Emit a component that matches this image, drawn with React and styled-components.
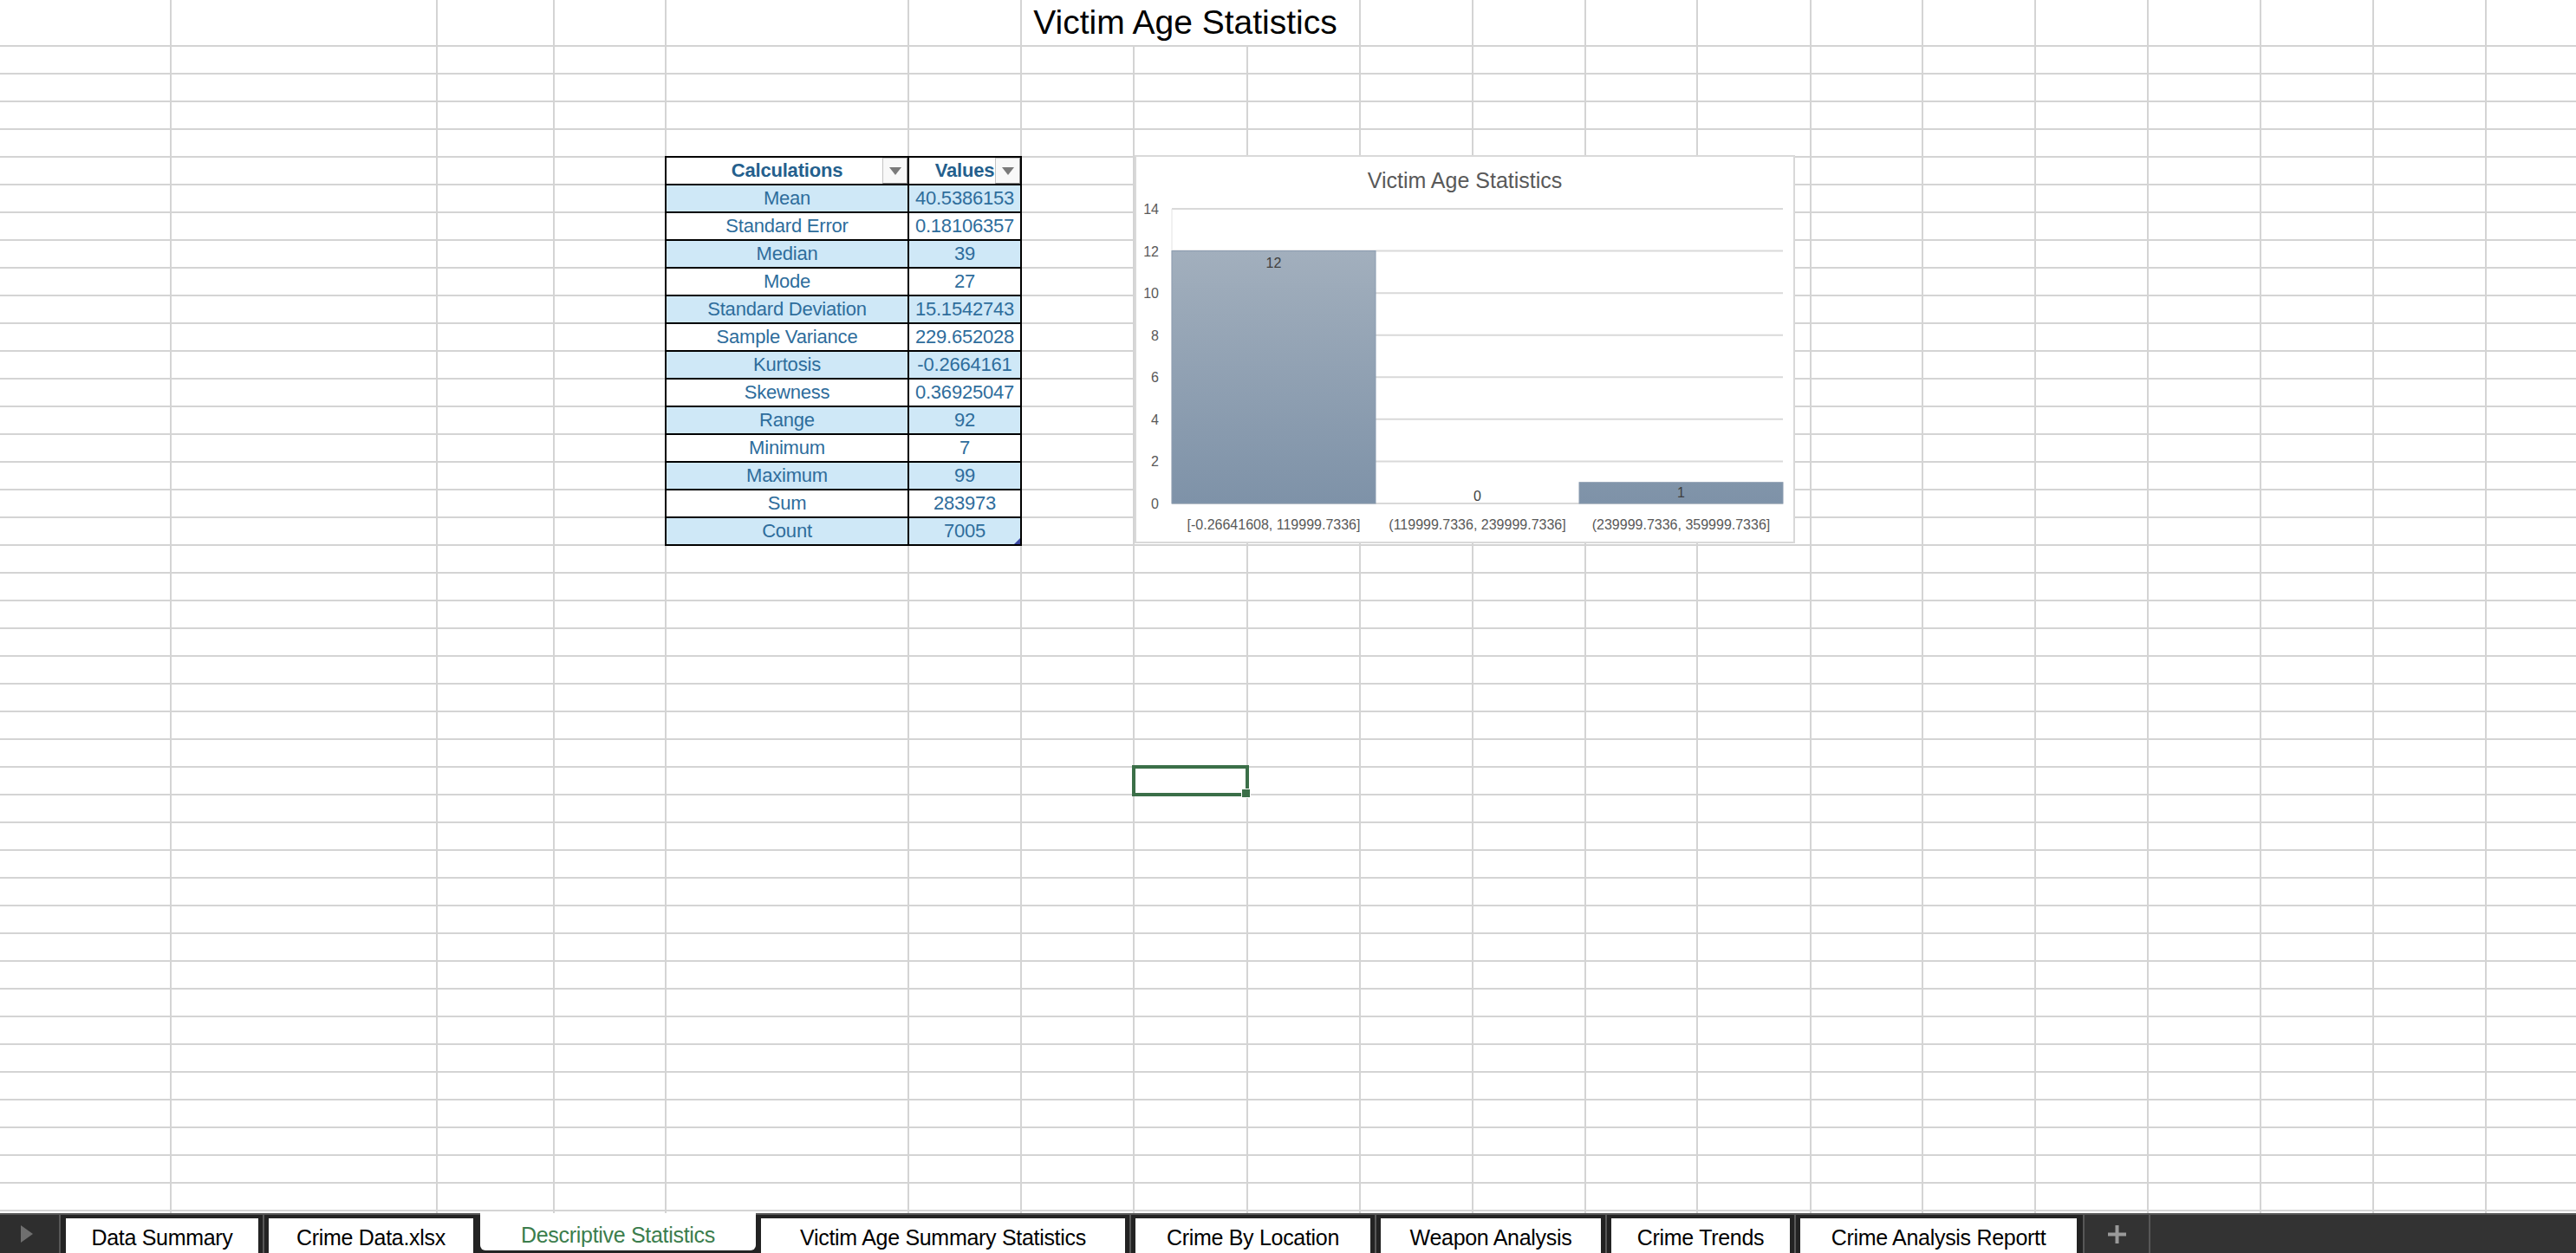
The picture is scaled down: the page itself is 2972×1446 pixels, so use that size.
import React from "react";
import styled, { createGlobalStyle, css } from "styled-components";

const GRID_LINE = "#d4d4d4";
const TABLE_HEAD = "#245f8d";
const TABLE_TEXT = "#2e6d9c";
const TABLE_FILL = "#cfe8f7";
const SELECT_GREEN = "#3b6f48";

// sheet geometry (px), last column takes what is left
const COLUMN_WIDTHS = [
  196, 305, 133, 127, 278, 128, 128, 129, 128, 128, 128, 127, 129, 127, 128,
  128, 128, 128, 128,
];
const COLUMN_COUNT = COLUMN_WIDTHS.length + 1;
const ROW_COUNT = 44;
const FILLER_COUNT = ROW_COUNT * COLUMN_COUNT - 3 - 28 - 1;

const STATS = [
  ["Mean", "40.5386153"],
  ["Standard Error", "0.18106357"],
  ["Median", "39"],
  ["Mode", "27"],
  ["Standard Deviation", "15.1542743"],
  ["Sample Variance", "229.652028"],
  ["Kurtosis", "-0.2664161"],
  ["Skewness", "0.36925047"],
  ["Range", "92"],
  ["Minimum", "7"],
  ["Maximum", "99"],
  ["Sum", "283973"],
  ["Count", "7005"],
];

const BINS = [
  { label: "[-0.26641608, 119999.7336]", value: 12 },
  { label: "(119999.7336, 239999.7336]", value: 0 },
  { label: "(239999.7336, 359999.7336]", value: 1 },
];

const SHEETS = [
  { name: "Data Summary", width: 222 },
  { name: "Crime Data.xlsx", width: 236 },
  { name: "Descriptive Statistics", width: 318, active: true },
  { name: "Victim Age Summary Statistics", width: 420 },
  { name: "Crime By Location", width: 271 },
  { name: "Weapon Analysis", width: 254 },
  { name: "Crime Trends", width: 206 },
  { name: "Crime Analysis Reportt", width: 319 },
];

function StatsChart() {
  const left = 41;
  const right = 746;
  const top = 60;
  const bottom = 400;
  const max = 14;
  const unit = (bottom - top) / max;
  const band = (right - left) / BINS.length;
  const ticks = [0, 2, 4, 6, 8, 10, 12, 14];

  return (
    <ChartFrame>
      <svg width="758" height="444" viewBox="0 0 758 444">
        <defs>
          <linearGradient
            id="barFill"
            gradientUnits="userSpaceOnUse"
            x1="0"
            y1="108"
            x2="0"
            y2={bottom}
          >
            <stop offset="0" stopColor="#a2afbd" />
            <stop offset="1" stopColor="#7e92a8" />
          </linearGradient>
        </defs>
        <text
          x="379"
          y="36"
          textAnchor="middle"
          fontFamily="Liberation Sans, Arial, sans-serif"
          fontSize="25"
          fill="#595959"
        >
          Victim Age Statistics
        </text>
        {ticks.map((t) => {
          const y = bottom - t * unit;
          return (
            <g key={t}>
              <line
                x1={left}
                x2={right}
                y1={y}
                y2={y}
                stroke="#d9d9d9"
                strokeWidth="2"
              />
              <text
                x="26"
                y={y + 6}
                textAnchor="end"
                fontFamily="Liberation Sans, Arial, sans-serif"
                fontSize="16"
                fill="#595959"
              >
                {t}
              </text>
            </g>
          );
        })}
        <line
          x1={left}
          x2={left}
          y1={top}
          y2={bottom}
          stroke="#e3e3e3"
          strokeWidth="1"
        />
        {BINS.map((b, i) => {
          const x = left + band * i;
          const h = b.value * unit;
          const cx = x + band / 2;
          return (
            <g key={b.label}>
              {b.value > 0 && (
                <rect
                  x={x}
                  y={bottom - h}
                  width={band}
                  height={h}
                  fill="url(#barFill)"
                  stroke="#8b9cb0"
                  strokeWidth="1"
                />
              )}
              <text
                x={cx}
                y={b.value > 1 ? bottom - h + 19 : bottom - 3 - (b.value ? 4 : 0)}
                textAnchor="middle"
                fontFamily="Liberation Sans, Arial, sans-serif"
                fontSize="16"
                fill="#404040"
              >
                {b.value}
              </text>
              <text
                x={cx}
                y="430"
                textAnchor="middle"
                fontFamily="Liberation Sans, Arial, sans-serif"
                fontSize="16"
                fill="#595959"
              >
                {b.label}
              </text>
            </g>
          );
        })}
      </svg>
    </ChartFrame>
  );
}

function StatsTable() {
  return (
    <TableBlock>
      <HeadCell>
        Calculations
        <FilterButton />
      </HeadCell>
      <HeadCell>
        Values
        <FilterButton />
      </HeadCell>
      {STATS.map(([name, value], i) => (
        <React.Fragment key={name}>
          <StatCell $filled={i % 2 === 0}>{name}</StatCell>
          <StatCell $filled={i % 2 === 0} $corner={i === STATS.length - 1}>
            {value}
          </StatCell>
        </React.Fragment>
      ))}
    </TableBlock>
  );
}

function SheetTabs() {
  return (
    <TabBar>
      <ScrollArea>
        <svg width="14" height="20" viewBox="0 0 14 20">
          <polygon points="0,0 14,10 0,20" fill="#6f6f6f" />
        </svg>
      </ScrollArea>
      <TabStrip>
        {SHEETS.map((s, i) => {
          const prev = SHEETS[i - 1];
          const needsSep = i > 0 && !s.active && !(prev && prev.active);
          return (
            <React.Fragment key={s.name}>
              {needsSep && <TabSep />}
              <Tab $width={s.width} $active={s.active}>
                {s.name}
              </Tab>
            </React.Fragment>
          );
        })}
      </TabStrip>
      <AddSheet>
        <svg width="21" height="21" viewBox="0 0 21 21">
          <rect x="8.5" y="0" width="4" height="21" fill="#9a9a9a" />
          <rect x="0" y="8.5" width="21" height="4" fill="#9a9a9a" />
        </svg>
      </AddSheet>
    </TabBar>
  );
}

export default function App() {
  return (
    <>
      <GlobalStyle />
      <Page>
        <SheetViewport>
          <Grid>
            <TitleCell>Victim Age Statistics</TitleCell>
            <StatsTable />
            <SelectedCell>
              <FillHandle />
            </SelectedCell>
            {Array.from({ length: FILLER_COUNT }, (_, i) => (
              <Cell key={i} />
            ))}
          </Grid>
          <StatsChart />
        </SheetViewport>
        <SheetTabs />
      </Page>
    </>
  );
}

const GlobalStyle = createGlobalStyle`
  html, body {
    margin: 0;
    padding: 0;
    background: #ffffff;
    overflow: hidden;
    font-family: "Liberation Sans", Arial, sans-serif;
  }
`;

const Page = styled.div`
  display: flex;
  flex-direction: column;
  width: 100vw;
  height: 100vh;
`;

const SheetViewport = styled.div`
  position: relative;
  flex: 1;
  overflow: hidden;
`;

const Grid = styled.div`
  display: grid;
  grid-template-columns: ${COLUMN_WIDTHS.map((w) => `${w}px`).join(" ")} 1fr;
  grid-template-rows: 52px;
  grid-auto-rows: 30px;
  gap: 2px;
  background: ${GRID_LINE};
`;

const Cell = styled.div`
  background: #ffffff;
`;

const TitleCell = styled.div`
  grid-column: 7 / span 3;
  grid-row: 1;
  background: #ffffff;
  display: flex;
  align-items: flex-end;
  justify-content: center;
  padding: 0 12px 7px 0;
  box-sizing: border-box;
  font-size: 39px;
  line-height: 39px;
  color: #000000;
  white-space: nowrap;
`;

const TableBlock = styled.div`
  grid-column: 5 / span 2;
  grid-row: 6 / span 14;
  margin: -2px;
  z-index: 1;
  display: grid;
  grid-template-columns: 278px 128px;
  grid-auto-rows: 30px;
  gap: 2px;
  border: 2px solid #000000;
  background: #000000;
  font-size: 22px;
`;

const tableCell = css`
  position: relative;
  display: flex;
  align-items: center;
  justify-content: center;
  white-space: nowrap;
  letter-spacing: -0.2px;
`;

const HeadCell = styled.div`
  ${tableCell};
  background: #ffffff;
  color: ${TABLE_HEAD};
  font-weight: bold;
`;

const StatCell = styled.div`
  ${tableCell};
  background: ${(p) => (p.$filled ? TABLE_FILL : "#ffffff")};
  color: ${TABLE_TEXT};

  ${(p) =>
    p.$corner &&
    css`
      &::after {
        content: "";
        position: absolute;
        right: 0;
        bottom: 0;
        border-left: 7px solid transparent;
        border-bottom: 7px solid #3d49a3;
      }
    `}
`;

const FilterButton = styled.span`
  position: absolute;
  top: 0;
  right: 0;
  width: 29px;
  height: 30px;
  box-sizing: border-box;
  border: 1px solid #c4c4c4;
  border-right-color: #8e8e8e;
  border-bottom-color: #8e8e8e;
  background: #f8f8f8;
  display: flex;
  align-items: center;
  justify-content: center;

  &::after {
    content: "";
    border-left: 7px solid transparent;
    border-right: 7px solid transparent;
    border-top: 9px solid #7a7a7a;
  }
`;

const SelectedCell = styled.div`
  grid-column: 8;
  grid-row: 28;
  margin: -3px;
  z-index: 1;
  position: relative;
  border: 4px solid ${SELECT_GREEN};
  background: #ffffff;
`;

const FillHandle = styled.span`
  position: absolute;
  right: -6px;
  bottom: -6px;
  width: 9px;
  height: 9px;
  background: ${SELECT_GREEN};
  border: 1px solid #ffffff;
`;

const ChartFrame = styled.div`
  position: absolute;
  left: 1309px;
  top: 179px;
  width: 762px;
  height: 448px;
  box-sizing: border-box;
  border: 2px solid #d9d9d9;
  background: #ffffff;
  z-index: 2;

  svg {
    display: block;
  }
`;

const TabBar = styled.div`
  display: flex;
  height: 46px;
  box-sizing: border-box;
  border-top: 2px solid #575757;
  background: #333333;
  font-family: "Liberation Sans", Arial, sans-serif;
`;

const ScrollArea = styled.div`
  width: 44px;
  padding-left: 24px;
  border-right: 2px solid #575757;
  display: flex;
  align-items: center;
  background: #2e2e2e;
`;

const TabStrip = styled.div`
  display: flex;
  background: #232323;
  padding: 0 7px 0 6px;
`;

const Tab = styled.div`
  width: ${(p) => p.$width}px;
  margin-top: 4px;
  padding-top: 5px;
  box-sizing: border-box;
  background: #ffffff;
  color: #000000;
  font-size: 25px;
  letter-spacing: -0.3px;
  display: flex;
  align-items: center;
  justify-content: center;
  white-space: nowrap;

  ${(p) =>
    p.$active &&
    css`
      margin: -2px 6px 3px 8px;
      padding-top: 8px;
      color: #3b7d4c;
      border-radius: 0 0 6px 6px;
    `}
`;

const TabSep = styled.div`
  width: 2px;
  margin: 0 5px;
  background: #575757;
`;

const AddSheet = styled.div`
  width: 74px;
  border-left: 2px solid #575757;
  border-right: 2px solid #575757;
  display: flex;
  align-items: center;
  justify-content: center;
`;
